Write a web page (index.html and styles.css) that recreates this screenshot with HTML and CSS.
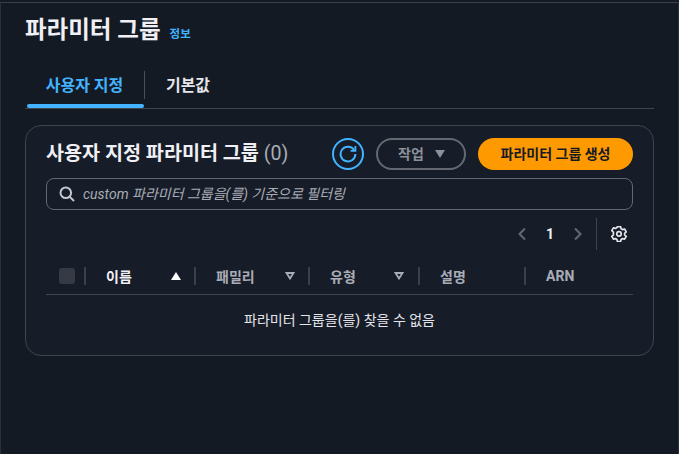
FILE: index.html
```html
<!DOCTYPE html>
<html lang="ko">
<head>
    <meta charset="UTF-8">
    <meta name="viewport" content="width=device-width, initial-scale=1.0">
    <title>파라미터 그룹</title>
    <link rel="stylesheet" href="styles.css">
</head>
<body>
    <div class="frame">
        <div class="page-head">
            <h1>파라미터 그룹</h1>
            <a class="info" href="#">정보</a>
        </div>

        <div class="tabs">
            <div class="tab active">사용자 지정</div>
            <div class="tab">기본값</div>
        </div>

        <div class="card">
            <div class="card-head">
                <h2>사용자 지정 파라미터 그룹 <span class="count">(0)</span></h2>
                <div class="actions">
                    <button class="btn-icon" aria-label="새로 고침">
                        <svg width="18" height="18" viewBox="0 0 18 18" fill="none" stroke="#42b4ff" stroke-width="2">
                            <path d="M15.200 5A7.400 7.400 0 1 0 16.400 9"/>
                            <path d="M16.400 1v4.800h-4.800" stroke-width="1.800"/>
                        </svg>
                    </button>
                    <button class="btn-action">작업 <span class="caret"></span></button>
                    <button class="btn-primary">파라미터 그룹 생성</button>
                </div>
            </div>

            <div class="filter">
                <svg width="16" height="16" viewBox="0 0 16 16" fill="none" stroke="#c6c6cd" stroke-width="2">
                    <circle cx="6.800" cy="6.800" r="5.300"/>
                    <path d="M10.600 10.600l4.400 4.400"/>
                </svg>
                <span class="placeholder">custom 파라미터 그룹을(를) 기준으로 필터링</span>
            </div>

            <div class="pager">
                <svg class="chev" width="10" height="14" viewBox="0 0 10 14" fill="none" stroke="#656871" stroke-width="2"><path d="M8 1.500L2.500 7 8 12.500"/></svg>
                <span class="page-num">1</span>
                <svg class="chev" width="10" height="14" viewBox="0 0 10 14" fill="none" stroke="#656871" stroke-width="2"><path d="M2 1.500L7.500 7 2 12.500"/></svg>
                <span class="pager-sep"></span>
                <svg class="gear" width="16" height="16" viewBox="0 0 16 16" fill="none" stroke="#e5e5ea" stroke-width="1.700" stroke-linejoin="round">
                    <path d="M6.400 .7h3.200l.5 2.100 1.400.8 2.100-.6 1.600 2.800-1.600 1.500v1.600l1.600 1.500-1.600 2.800-2.100-.6-1.400.8-.5 2.100H6.400l-.5-2.100-1.400-.8-2.100.6-1.600-2.800 1.600-1.500V6.100L.8 4.600l1.600-2.800 2.100.6 1.400-.8z"/>
                    <circle cx="8" cy="7.900" r="2.200"/>
                </svg>
            </div>

            <div class="table-head">
                <div class="col col-check"><span class="checkbox"></span></div>
                <div class="col col-name sorted">이름
                    <svg width="10" height="8" viewBox="0 0 10 8"><path d="M5 0l5 8H0z" fill="#fff"/></svg>
                </div>
                <div class="col col-family">패밀리
                    <svg width="10" height="8" viewBox="0 0 10 8" fill="none" stroke="#a9acb5" stroke-width="1.800"><path d="M1.500 1h7L5 6.500z"/></svg>
                </div>
                <div class="col col-type">유형
                    <svg width="10" height="8" viewBox="0 0 10 8" fill="none" stroke="#a9acb5" stroke-width="1.800"><path d="M1.500 1h7L5 6.500z"/></svg>
                </div>
                <div class="col col-desc">설명</div>
                <div class="col col-arn">ARN</div>
            </div>

            <div class="empty">파라미터 그룹을(를) 찾을 수 없음</div>
        </div>
    </div>
</body>
</html>
```

FILE: styles.css
```css
* {
    box-sizing: border-box;
}
html, body {
    height: 100%;
}
body {
    margin: 0;
    background-color: #141a24;
    color: #e5e5ea;
    font-family: Roboto, "Noto Sans CJK KR", sans-serif;
    overflow: hidden;
}
.frame {
    height: 454px;
    margin-top: 2px;
    padding: 0 24px;
    border-top: 1px solid #3c4048;
    border-left: 1px solid #2a2f38;
    border-right: 1px solid #2a2f38;
}
.page-head {
    display: flex;
    align-items: flex-start;
    gap: 9px;
    height: 40px;
    padding-top: 13px;
}
h1 {
    margin: 0;
    font-size: 23.5px;
    line-height: 28px;
    font-weight: 700;
    color: #f0f0f4;
}
.info {
    margin-top: 11px;
    color: #42b4ff;
    font-size: 11.5px;
    line-height: 14px;
    font-weight: 700;
    text-decoration: none;
}

.tabs {
    display: flex;
    height: 66px;
    padding-top: 28px;
    border-bottom: 1px solid #3f444d;
}
.tab {
    position: relative;
    display: flex;
    align-items: center;
    justify-content: center;
    height: 28px;
    padding-bottom: 2px;
    font-size: 16px;
    font-weight: 700;
    color: #e5e5ea;
}
.tab.active {
    width: 120px;
    color: #42b4ff;
    border-right: 1px solid #4a4e56;
}
.tab.active::after {
    content: "";
    position: absolute;
    left: 2px;
    right: 0;
    bottom: -9px;
    height: 4px;
    border-radius: 2px;
    background: #42b4ff;
}
.tab:not(.active) {
    width: 86px;
}

.card {
    height: 231px;
    width: 629px;
    margin-top: 16px;
    padding: 0 20px;
    background: #161d29;
    border: 1px solid #3f444d;
    border-radius: 16px;
}
.card-head {
    display: flex;
    justify-content: space-between;
    align-items: center;
    height: 52px;
    padding-top: 4px;
}
h2 {
    margin: 0;
    font-size: 19.6px;
    line-height: 24px;
    font-weight: 700;
    color: #f0f0f4;
}
.count {
    font-weight: 400;
    color: #a9acb5;
}
.actions {
    display: flex;
    align-items: center;
    gap: 12px;
}
button {
    font-family: inherit;
    cursor: pointer;
}
.btn-icon {
    display: flex;
    align-items: center;
    justify-content: center;
    width: 32px;
    height: 32px;
    padding: 0;
    background: none;
    border: 2px solid #42b4ff;
    border-radius: 50%;
}
.btn-action {
    display: flex;
    align-items: center;
    justify-content: center;
    gap: 11px;
    width: 90px;
    height: 32px;
    padding: 0 0 2px 1px;
    background: none;
    border: 2px solid #656871;
    border-radius: 16px;
    color: #8d9099;
    font-size: 14px;
    font-weight: 700;
}
.caret {
    width: 0;
    height: 0;
    margin-top: 2px;
    border-left: 5px solid transparent;
    border-right: 5px solid transparent;
    border-top: 8px solid #8d9099;
}
.btn-primary {
    width: 155px;
    height: 32px;
    padding: 0 0 3px;
    background: #ff9900;
    border: none;
    border-radius: 16px;
    color: #141a24;
    font-size: 14px;
    font-weight: 700;
}

.filter {
    display: flex;
    align-items: center;
    gap: 8px;
    height: 32px;
    padding-left: 12px;
    background: #161d29;
    border: 1px solid #656871;
    border-radius: 8px;
}
.placeholder {
    padding-bottom: 2px;
    color: #a9acb5;
    font-size: 14px;
    font-style: italic;
}

.pager {
    display: flex;
    align-items: center;
    justify-content: flex-end;
    height: 32px;
    margin-top: 8px;
    padding-right: 6px;
}
.page-num {
    width: 46px;
    text-align: center;
    font-size: 14px;
    font-weight: 700;
    color: #f0f0f4;
}
.pager-sep {
    width: 1px;
    height: 32px;
    margin: 0 14px 0 13px;
    background: #3f444d;
}

.table-head {
    display: flex;
    align-items: center;
    height: 38px;
    margin-top: 7px;
    border-bottom: 1px solid #3f444d;
    font-size: 14px;
    font-weight: 700;
    color: #a9acb5;
}
.col {
    display: flex;
    align-items: center;
    justify-content: space-between;
    height: 18px;
    padding: 0 20px;
    border-left: 2px solid #3a3f48;
}
.col-check {
    width: 38px;
    padding: 0 0 0 13px;
    border-left: none;
}
.checkbox {
    display: block;
    width: 16px;
    height: 16px;
    border-radius: 3px;
    background: #353a45;
}
.col-name {
    width: 110px;
    padding-right: 13px;
}
.sorted {
    color: #f0f0f4;
}
.col-family {
    width: 114px;
    padding-right: 13px;
}
.col-type {
    width: 110px;
    padding-right: 14px;
}
.col-desc {
    width: 106px;
}
.col-arn {
    width: 108px;
}

.empty {
    padding-top: 14px;
    text-align: center;
    font-size: 14px;
    color: #e5e5ea;
}
```
